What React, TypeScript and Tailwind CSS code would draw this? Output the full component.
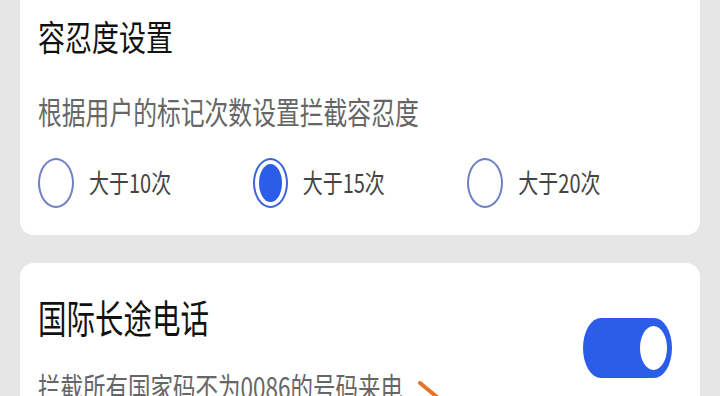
import React from "react";

const font = { fontFamily: '"Noto Sans CJK SC", "Noto Sans", sans-serif' };

function Radio({ checked, label }: { checked?: boolean; label: string }) {
  return (
    <div className="flex items-center gap-[15px]">
      {checked ? (
        <div className="w-[35px] h-[50px] rounded-[50%] border-2 border-[#3d63d8] p-[4px] flex">
          <div className="flex-1 rounded-[50%] bg-[#2b5de8]" />
        </div>
      ) : (
        <div className="w-[36px] h-[50px] rounded-[50%] border-2 border-[#6f80c4]" />
      )}
      <span className="inline-block text-[20px] leading-[28px] text-[#444] scale-y-[1.28]">{label}</span>
    </div>
  );
}

export default function App() {
  return (
    <div style={font} className="w-[720px] h-[396px] overflow-hidden bg-[#e6e6e6] px-[20px]">
      <div className="mt-[-20px] rounded-[14px] bg-white pl-[18px] pr-[18px] pt-[39px] pb-[27px]">
        <div className="h-[36px] flex items-center">
          <span className="inline-block text-[27px] leading-[36px] text-[#111] scale-y-[1.3]">容忍度设置</span>
        </div>
        <div className="mt-[40px] h-[32px] flex items-center">
          <span className="inline-block text-[23.8px] leading-[32px] text-[#666] scale-y-[1.3]">根据用户的标记次数设置拦截容忍度</span>
        </div>
        <div className="mt-[31px] grid grid-cols-3">
          <Radio label="大于10次" />
          <Radio checked label="大于15次" />
          <Radio label="大于20次" />
        </div>
      </div>
      <div className="mt-[28px] rounded-[14px] bg-white pl-[18px] pr-[28px] pt-[36px] pb-[20px] flex items-start justify-between">
        <div className="flex flex-col">
          <div className="h-[36px] flex items-center">
            <span className="inline-block text-[28.5px] leading-[36px] text-[#111] scale-y-[1.35]">国际长途电话</span>
          </div>
          <div className="mt-[35px] h-[32px] flex items-center">
            <span className="inline-block text-[22.5px] leading-[32px] text-[#666] scale-y-[1.3]">拦截所有国家码不为0086的号码来电</span>
            <svg width="26" height="24" viewBox="0 0 26 24" className="ml-[14px] mt-[14px]">
              <path d="M3 2 L20 16" stroke="#e8742a" strokeWidth="4" strokeLinecap="round" fill="none" />
            </svg>
          </div>
        </div>
        <div className="mt-[19px] w-[89px] h-[60px] rounded-[18px/30px] bg-[#2b5de8] flex items-center justify-end pr-[2px]">
          <div className="w-[33px] h-[50px] rounded-[50%] bg-white border-[3px] border-[#2b5de8]" />
        </div>
      </div>
    </div>
  );
}
